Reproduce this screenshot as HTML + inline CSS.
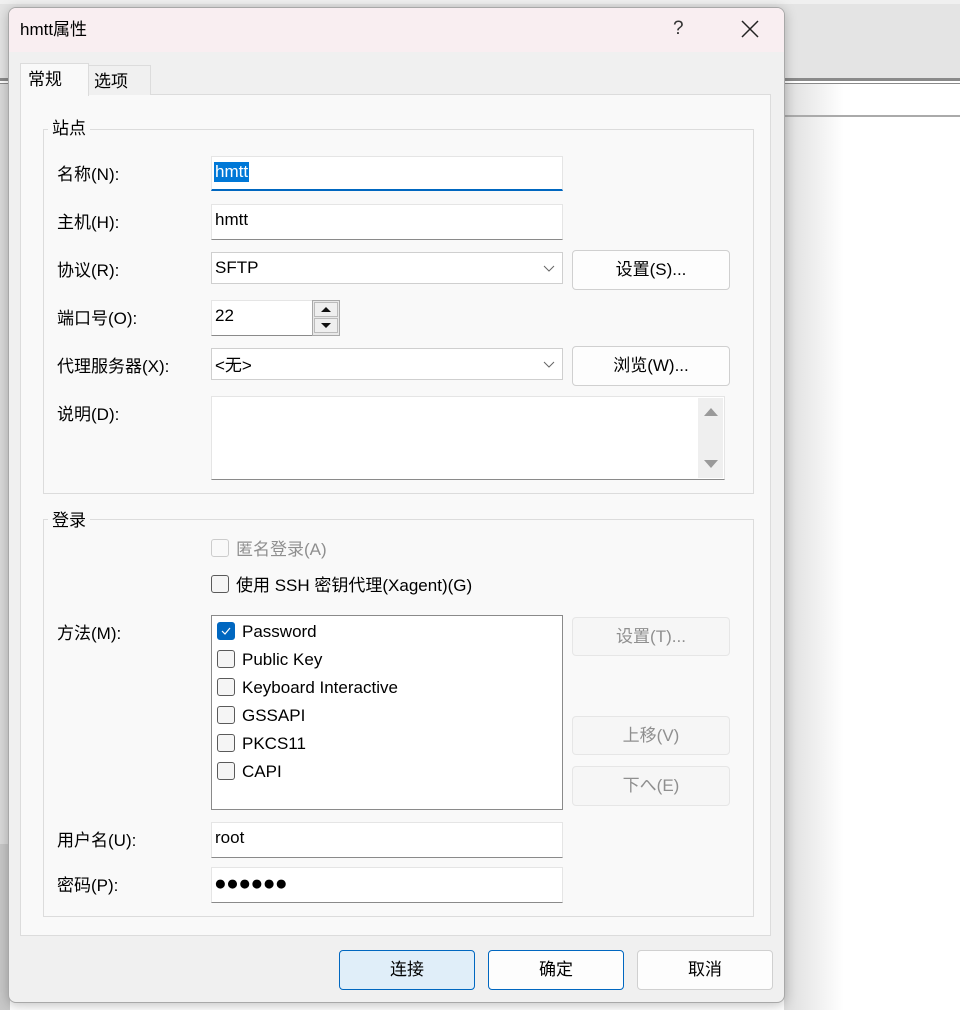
<!DOCTYPE html>
<html><head><meta charset="utf-8"><style>
*{box-sizing:border-box;margin:0;padding:0}
body{width:960px;height:1010px;position:relative;overflow:hidden;background:#fff;font-family:"Liberation Sans","Noto Sans CJK SC",sans-serif;font-size:17px;color:#000}
.a{position:absolute}
.t{position:absolute;white-space:nowrap;line-height:20px;margin-top:1px}
.in{position:absolute;background:#fff;border:1px solid #e5e5e5;border-bottom:1px solid #8a8a8a}
.btn{position:absolute;background:#fdfdfd;border:1px solid #d0d0d0;border-radius:4px;text-align:center;line-height:38px}
.dis{background:#f6f6f6;border-color:#e6e6e6;color:#8f8f8f}
.cb{position:absolute;width:18px;height:18px;border:1px solid #5a5a5a;border-radius:3px;background:#f5f5f5}
.grp{position:absolute;border:1px solid #dcdcdc}
.leg{position:absolute;background:#f9f9f9;padding:0 4px;line-height:20px;margin-top:1px}
</style></head><body>
<!-- background app -->
<div class="a" style="left:784px;top:84px;width:60px;height:926px;background:linear-gradient(90deg,#ddd,#fff)"></div>
<div class="a" style="left:0;top:0;width:960px;height:4px;background:#f0f0f0"></div>
<div class="a" style="left:0;top:4px;width:960px;height:74px;background:#e4e4e4"></div>
<div class="a" style="left:0;top:78px;width:960px;height:3px;background:#8a8a8a"></div>
<div class="a" style="left:0;top:81px;width:960px;height:2px;background:#fff"></div>
<div class="a" style="left:0;top:83px;width:960px;height:1px;background:#8a8a8a"></div>
<div class="a" style="left:0;top:115px;width:960px;height:2px;background:#aaa"></div>
<div class="a" style="left:0;top:84px;width:10px;height:760px;background:#dadada"></div>
<div class="a" style="left:0;top:844px;width:10px;height:166px;background:#c8c8c8"></div>
<!-- dialog -->
<div class="a" style="left:8px;top:7px;width:777px;height:996px;background:#f0f0f0;border:1px solid #a8a8a8;border-radius:8px;box-shadow:0 2px 12px rgba(0,0,0,.25);overflow:hidden">
  <div class="a" style="left:0;top:0;width:777px;height:44px;background:#f9eef1"></div>
</div>
<div class="t" style="left:20px;top:19px;font-size:17px">hmtt属性</div>
<div class="t" style="left:673px;top:18px;font-size:19px;color:#333">?</div>
<svg class="a" style="left:741px;top:20px" width="18" height="18"><path d="M1 1L17 17M17 1L1 17" stroke="#222" stroke-width="1.5"/></svg>
<!-- tabs -->
<div class="a" style="left:20px;top:94px;width:751px;height:842px;background:#f9f9f9;border:1px solid #dcdcdc"></div>
<div class="a" style="left:88px;top:65px;width:63px;height:30px;background:#f0f0f0;border:1px solid #dcdcdc;border-bottom:none"></div>
<div class="a" style="left:20px;top:63px;width:69px;height:33px;background:#f9f9f9;border:1px solid #dcdcdc;border-bottom:none"></div>
<div class="t" style="left:28px;top:69px">常规</div>
<div class="t" style="left:94px;top:71px">选项</div>
<!-- group 站点 -->
<div class="grp" style="left:43px;top:129px;width:711px;height:365px"></div>
<div class="leg" style="left:48px;top:118px">站点</div>
<div class="t" style="left:57px;top:164px">名称(N):</div>
<div class="t" style="left:57px;top:212px">主机(H):</div>
<div class="t" style="left:57px;top:260px">协议(R):</div>
<div class="t" style="left:57px;top:308px">端口号(O):</div>
<div class="t" style="left:57px;top:356px">代理服务器(X):</div>
<div class="t" style="left:57px;top:404px">说明(D):</div>
<div class="in" style="left:211px;top:156px;width:352px;height:35px;border-bottom:2px solid #0067c0"></div>
<div class="t" style="left:214px;top:161px;background:#0078d7;color:#fff;padding:0 1px">hmtt</div>
<div class="in" style="left:211px;top:204px;width:352px;height:36px"></div>
<div class="t" style="left:215px;top:209px">hmtt</div>
<div class="in" style="left:211px;top:252px;width:352px;height:32px;border:1px solid #cfcfcf"></div>
<div class="t" style="left:215px;top:257px">SFTP</div>
<svg class="a" style="left:543px;top:265px" width="12" height="7"><path d="M1 1L6 6L11 1" stroke="#666" fill="none"/></svg>
<div class="btn" style="left:572px;top:250px;width:158px;height:40px">设置(S)...</div>
<div class="in" style="left:211px;top:300px;width:102px;height:36px"></div>
<div class="t" style="left:215px;top:305px">22</div>
<div class="a" style="left:312px;top:300px;width:28px;height:36px;border:1px solid #a8a8a8;background:#e8e8e8"></div>
<div class="a" style="left:314px;top:302px;width:24px;height:15px;border:1px solid #bbb;background:#efefef"></div>
<div class="a" style="left:314px;top:318px;width:24px;height:15px;border:1px solid #bbb;background:#efefef"></div>
<svg class="a" style="left:320px;top:306px" width="12" height="24"><path d="M1 6L6 1L11 6Z M1 17L6 22L11 17Z" fill="#111"/></svg>
<div class="in" style="left:211px;top:348px;width:352px;height:32px;border:1px solid #cfcfcf"></div>
<div class="t" style="left:215px;top:355px">&lt;无&gt;</div>
<svg class="a" style="left:543px;top:361px" width="12" height="7"><path d="M1 1L6 6L11 1" stroke="#666" fill="none"/></svg>
<div class="btn" style="left:572px;top:346px;width:158px;height:40px">浏览(W)...</div>
<div class="in" style="left:211px;top:396px;width:514px;height:84px"></div>
<div class="a" style="left:698px;top:398px;width:25px;height:80px;background:#efefef"></div>
<svg class="a" style="left:703px;top:405px" width="16" height="64"><path d="M1 11L8 3L15 11Z M1 55L8 63L15 55Z" fill="#9a9a9a"/></svg>
<!-- group 登录 -->
<div class="grp" style="left:43px;top:519px;width:711px;height:398px"></div>
<div class="leg" style="left:48px;top:510px">登录</div>
<div class="cb" style="left:211px;top:539px;border-color:#ccc;background:#f9f9f9"></div>
<div class="t" style="left:236px;top:539px;color:#8f8f8f">匿名登录(A)</div>
<div class="cb" style="left:211px;top:575px"></div>
<div class="t" style="left:236px;top:575px">使用 SSH 密钥代理(Xagent)(G)</div>
<div class="t" style="left:57px;top:623px">方法(M):</div>
<div class="a" style="left:211px;top:615px;width:352px;height:195px;background:#fff;border:1px solid #8a8a8a"></div>
<div class="cb" style="left:217px;top:622px;background:#0067c0;border-color:#0067c0"></div>
<svg class="a" style="left:220px;top:626px" width="12" height="10"><path d="M2 5L5 8L10 2" stroke="#fff" stroke-width="1.2" fill="none"/></svg>
<div class="t" style="left:242px;top:621px">Password</div>
<div class="cb" style="left:217px;top:650px"></div><div class="t" style="left:242px;top:649px">Public Key</div>
<div class="cb" style="left:217px;top:678px"></div><div class="t" style="left:242px;top:677px">Keyboard Interactive</div>
<div class="cb" style="left:217px;top:706px"></div><div class="t" style="left:242px;top:705px">GSSAPI</div>
<div class="cb" style="left:217px;top:734px"></div><div class="t" style="left:242px;top:733px">PKCS11</div>
<div class="cb" style="left:217px;top:762px"></div><div class="t" style="left:242px;top:761px">CAPI</div>
<div class="btn dis" style="left:572px;top:617px;width:158px;height:39px">设置(T)...</div>
<div class="btn dis" style="left:572px;top:716px;width:158px;height:39px">上移(V)</div>
<div class="btn dis" style="left:572px;top:766px;width:158px;height:40px">下へ(E)</div>
<div class="t" style="left:57px;top:830px">用户名(U):</div>
<div class="t" style="left:57px;top:875px">密码(P):</div>
<div class="in" style="left:211px;top:822px;width:352px;height:36px"></div>
<div class="t" style="left:215px;top:827px">root</div>
<div class="in" style="left:211px;top:867px;width:352px;height:36px"></div>
<div class="t" style="left:214px;top:873px;font-size:21px;letter-spacing:-0.5px">●●●●●●</div>
<!-- bottom buttons -->
<div class="btn" style="left:339px;top:950px;width:136px;height:40px;background:#e0eef9;border-color:#0067c0">连接</div>
<div class="btn" style="left:488px;top:950px;width:136px;height:40px;border-color:#0067c0">确定</div>
<div class="btn" style="left:637px;top:950px;width:136px;height:40px">取消</div>
</body></html>
